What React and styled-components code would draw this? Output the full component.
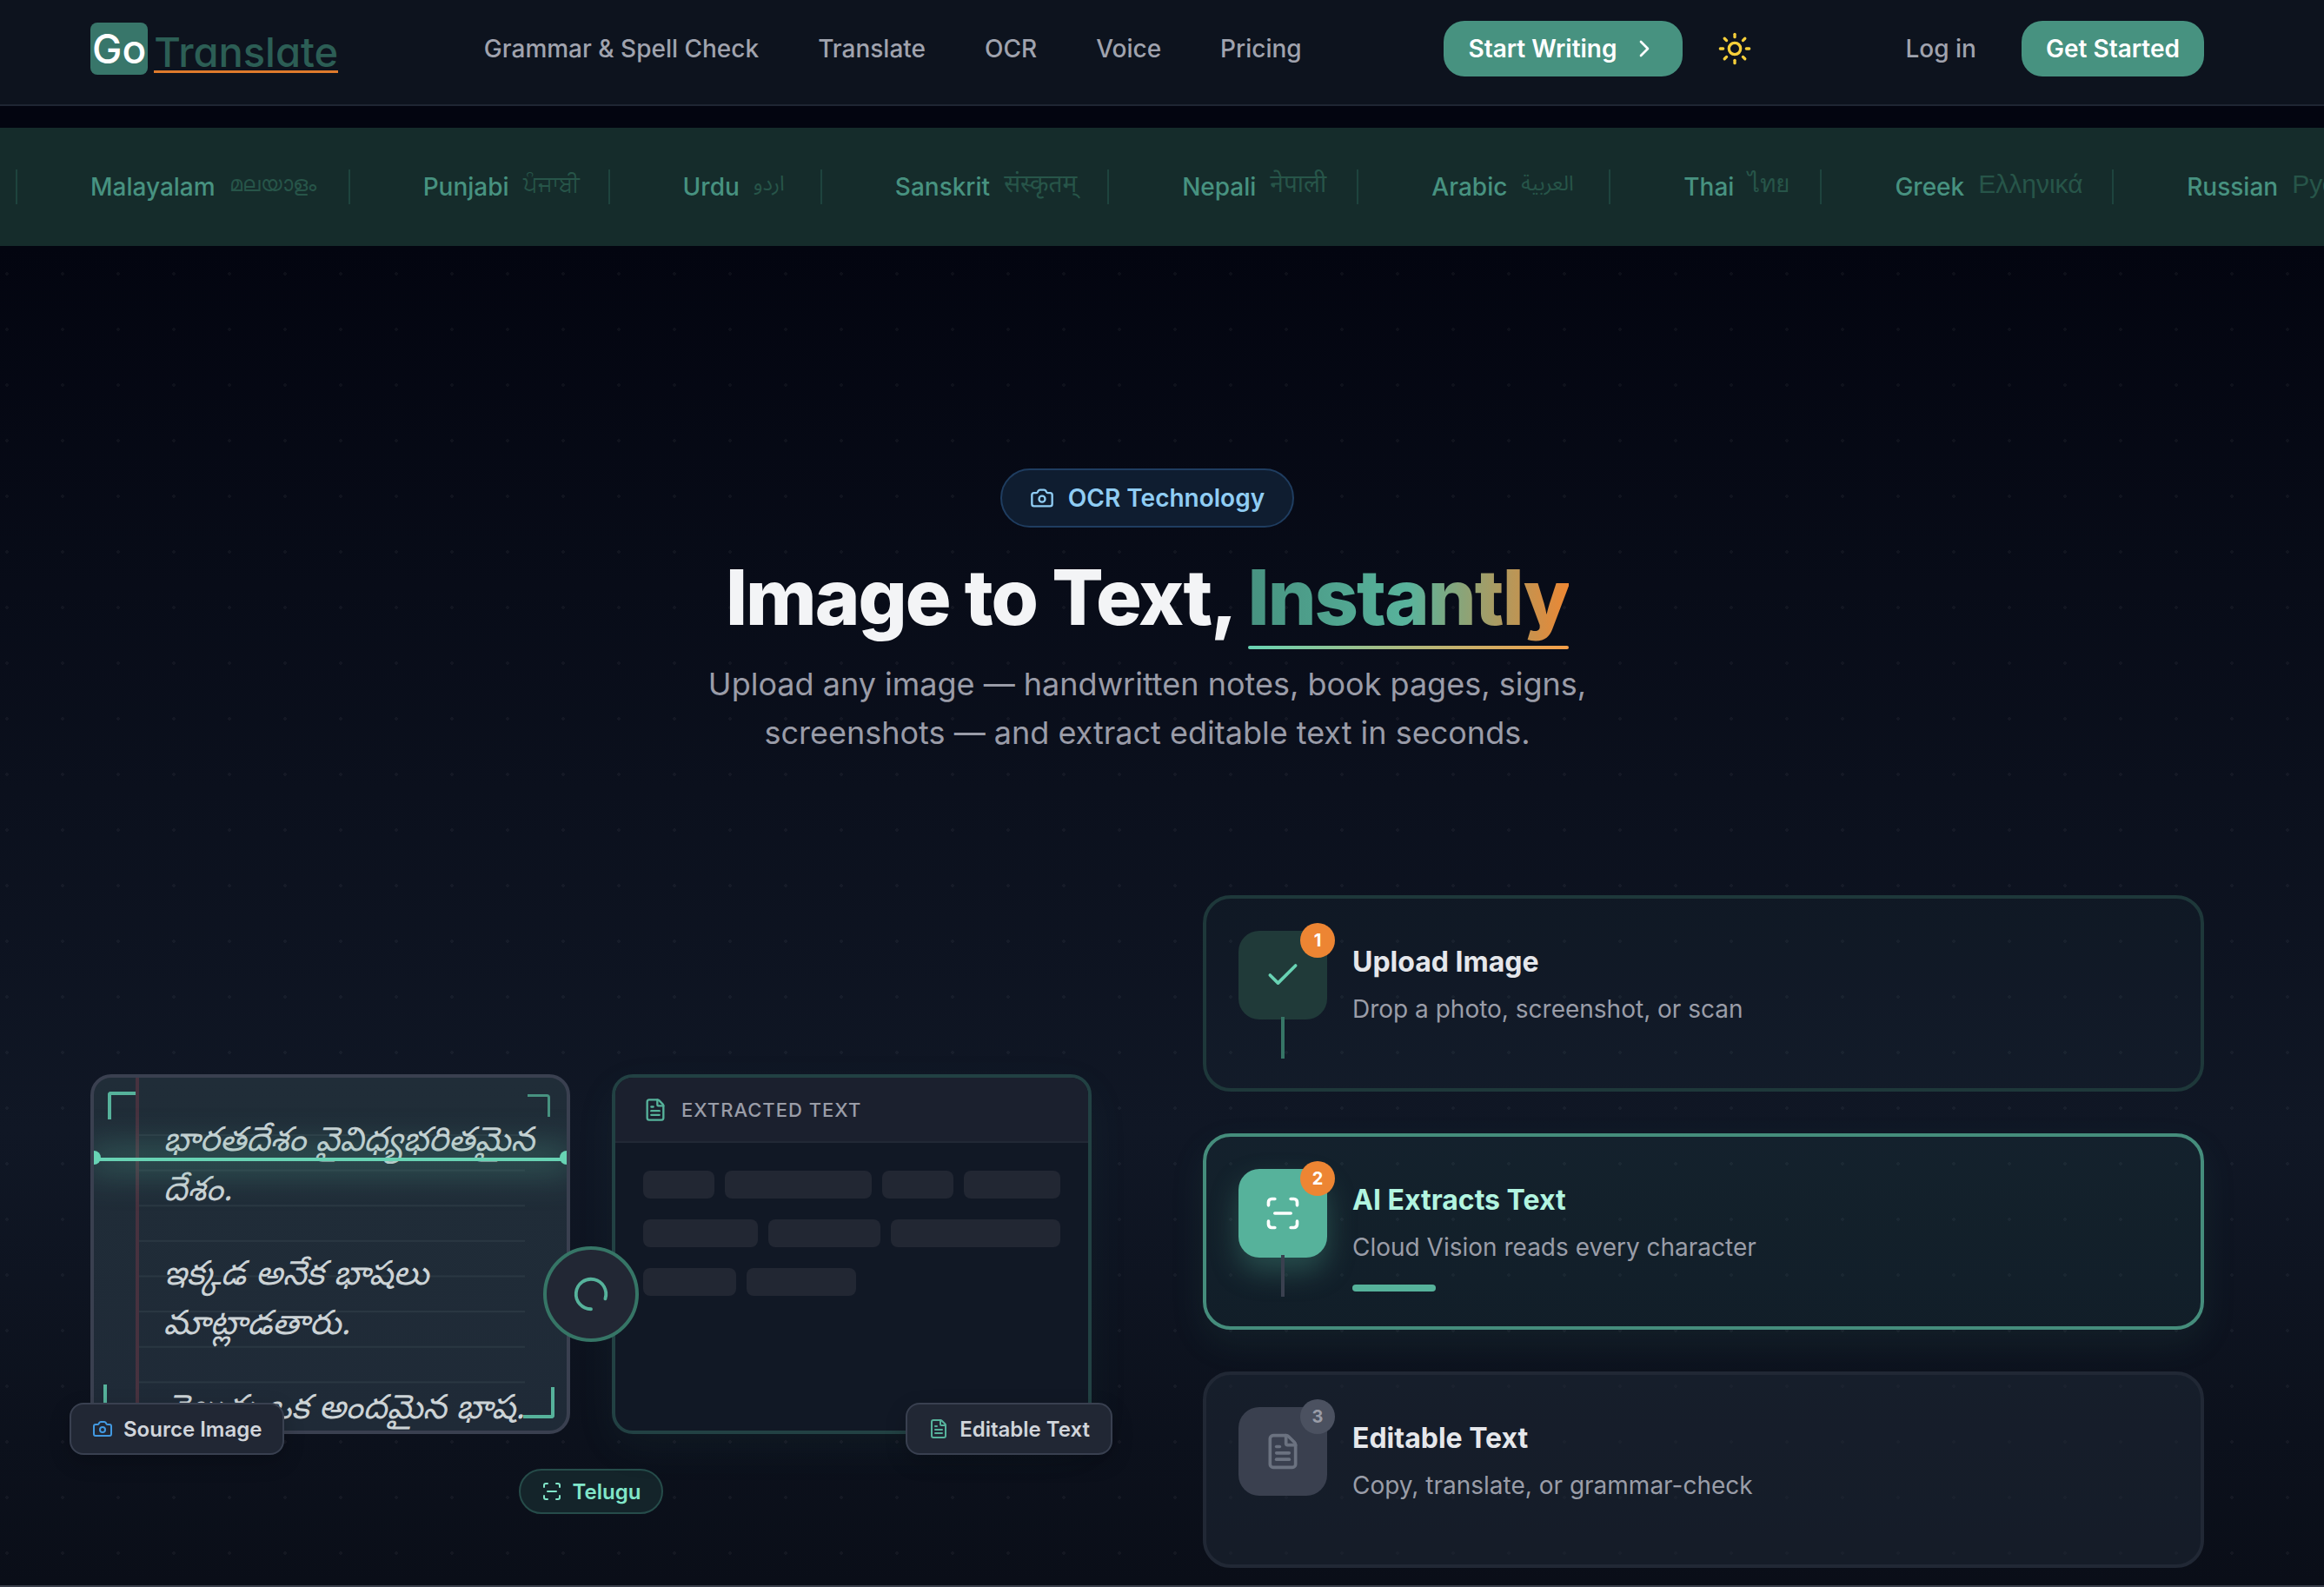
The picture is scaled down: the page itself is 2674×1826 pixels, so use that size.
import React from "react"
import styled, { createGlobalStyle, css } from "styled-components"
import {
  Camera,
  Check,
  ChevronRight,
  FileText,
  LoaderCircle,
  ScanLine,
  Sun,
} from "lucide-react"

const GlobalStyle = createGlobalStyle`
  *, *::before, *::after {
    box-sizing: border-box;
  }

  body {
    margin: 0;
    background: #030510;
    color: #f3f4f6;
    font-family: Inter, "Noto Sans", sans-serif;
    overflow-x: hidden;
  }

  h1, h2, h3, p, ul, ol {
    margin: 0;
    padding: 0;
  }

  ul, ol {
    list-style: none;
  }
`

const Header = styled.header`
  display: flex;
  align-items: center;
  justify-content: space-between;
  height: 122px;
  padding: 0 138px 8px 104px;
  background: #0d131e;
  border-bottom: 2px solid #1f2633;
`

const Logo = styled.a`
  display: flex;
  align-items: center;
  gap: 7px;
  text-decoration: none;
  font-weight: 500;
  font-feature-settings: "cv11";
`

const LogoMark = styled.span`
  padding: 0 2px;
  border-radius: 8px;
  background: #38766a;
  color: #fff;
  font-size: 46px;
  line-height: 60px;
`

const LogoName = styled.span`
  margin-top: 11px;
  border-bottom: 3px solid #dd7a2c;
  color: #2c5e55;
  font-size: 47px;
  line-height: 42px;
`

const Nav = styled.nav`
  display: flex;
  gap: 68px;
  padding-left: 4px;
`

const NavLink = styled.a`
  color: #a0a3ae;
  font-size: 28px;
  font-weight: 500;
  line-height: 40px;
  text-decoration: none;
`

const Actions = styled.div`
  display: flex;
  align-items: center;
`

const Button = styled.button`
  display: flex;
  align-items: center;
  gap: 16px;
  height: 64px;
  padding: 0 28px;
  border: 0;
  border-radius: 24px;
  background: #479280;
  color: #fff;
  font-family: inherit;
  font-size: 28px;
  font-weight: 600;
`

const ThemeButton = styled.button`
  display: flex;
  margin: 0 160px 0 24px;
  padding: 16px;
  border: 0;
  background: none;
  color: #f6cf3a;
`

const LoginLink = styled(NavLink)`
  margin-right: 52px;
`

const Marquee = styled.section`
  margin-top: 25px;
  padding: 48px 0 48px 18px;
  background: #152c2b;
  overflow: hidden;
`

const Languages = styled.ul`
  display: flex;
  width: max-content;
`

const Language = styled.li`
  display: flex;
  align-items: center;
  gap: 16px;
  height: 40px;
  padding: 0 34px 0 84px;
  border-left: 2px solid #1e443e;
  font-size: 28px;
`

const LanguageName = styled.span`
  color: #479280;
  font-weight: 500;
`

// Scripts differ a lot in width, so each one reserves its own slot.
const NativeName = styled.span`
  width: ${(p) => p.$width}px;
  padding-bottom: 6px;
  color: #275549;
  font-family: "Liberation Sans", "Noto Sans", sans-serif;
  line-height: 40px;
  white-space: nowrap;

  &:lang(ml) {
    font-size: 24px;
  }

  &:lang(pa) {
    font-size: 26px;
  }

  &:lang(el),
  &:lang(ru) {
    font-size: 30px;
  }

  &:lang(ar),
  &:lang(ur) {
    font-family: "Noto Sans Arabic", "Noto Naskh Arabic",
      "DejaVu Sans Condensed", "DejaVu Sans", sans-serif;
    font-size: 24px;
  }
`

const Hero = styled.main`
  padding: 256px 138px 20px 104px;
  background-color: #0b0f19;
  background-image: radial-gradient(
      circle,
      rgba(255, 255, 255, 0.04) 2px,
      transparent 2px
    ),
    linear-gradient(#030510, #101725 66%, #0a0e18);
  background-position: -24px 0, 0 0;
  background-size: 64px 64px, 100% 100%;
  border-bottom: 2px solid #3a3f4b;
`

const Intro = styled.div`
  display: flex;
  flex-direction: column;
  align-items: center;
  text-align: center;
`

const Badge = styled.span`
  display: flex;
  align-items: center;
  gap: 16px;
  height: 68px;
  padding: 0 32px;
  border: 2px solid #1f3d60;
  border-radius: 34px;
  background: #0f1d30;
  color: #90cdf4;
  font-size: 28px;
  font-weight: 600;
`

const Title = styled.h1`
  margin-top: 26px;
  font-size: 88px;
  font-weight: 800;
  letter-spacing: -2px;
  line-height: 108px;
`

const Highlight = styled.span`
  position: relative;
  display: inline-block;
  background: linear-gradient(to right, #479280, #58b39c 50%, #ed8733);
  background-clip: text;
  color: transparent;

  &::after {
    content: "";
    position: absolute;
    left: 0;
    right: 0;
    bottom: -6px;
    height: 4px;
    border-radius: 2px;
    background: linear-gradient(to right, #68d3b4, #f69f48);
  }
`

const Lead = styled.p`
  max-width: 1080px;
  margin-top: 18px;
  color: #9a9ca8;
  font-size: 36px;
  line-height: 56px;
`

const Columns = styled.div`
  display: grid;
  grid-template-columns: 1fr 1fr;
  gap: 128px;
  margin-top: 159px;
`

const Demo = styled.div`
  align-self: end;
  position: relative;
  display: flex;
  flex-direction: column;
  align-items: center;
  gap: 40px;
  margin-bottom: 62px;
`

const Panels = styled.div`
  display: grid;
  grid-template-columns: 1fr 1fr;
  gap: 48px;
  width: 100%;
`

const Panel = styled.div`
  position: relative;
  aspect-ratio: 4 / 3;
`

const Frame = styled.div`
  position: relative;
  height: 100%;
  overflow: hidden;
  border: 4px solid ${(p) => (p.$result ? "#224143" : "#3a4050")};
  border-radius: 24px;
  background: ${(p) =>
    p.$result ? "#111825" : "linear-gradient(#202d38, #1f2a37)"};
  box-shadow: ${(p) =>
    p.$result ? "0 16px 48px rgba(71, 146, 128, 0.07)" : "none"};
`

const Margin = styled.div`
  position: absolute;
  top: 0;
  bottom: 0;
  left: 48px;
  width: 4px;
  background: #47323f;
`

const Ruling = styled.div`
  position: absolute;
  top: 16%;
  left: 48px;
  right: 48px;
  height: 80%;
  background: linear-gradient(#2a3742 2px, transparent 2px);
  background-size: 100% 12.5%;
`

const Handwriting = styled.div`
  position: relative;
  display: flex;
  flex-direction: column;
  gap: 40px;
  padding: 48px 24px 0 80px;
  color: #ccd3d6;
  font-family: "Noto Sans Telugu", "Noto Sans", sans-serif;
  font-size: 39px;
  font-style: italic;
  line-height: 57px;
  white-space: nowrap;
`

const ScanBeam = styled.div`
  position: absolute;
  top: 92px;
  left: 0;
  right: 0;
  height: 4px;
  background: #68d3b4;
  box-shadow: 0 0 40px 8px rgba(88, 179, 156, 0.5);

  &::before,
  &::after {
    content: "";
    position: absolute;
    top: -8px;
    width: 16px;
    height: 16px;
    border-radius: 50%;
    background: #68d3b4;
  }

  &::before {
    left: -8px;
  }

  &::after {
    right: -8px;
  }
`

const Corner = styled.span`
  position: absolute;
  ${(p) => p.$y}: ${(p) => 32 - p.$size / 2}px;
  ${(p) => p.$x}: ${(p) => 32 - p.$size / 2}px;
  width: ${(p) => p.$size}px;
  height: ${(p) => p.$size}px;
  border: 0 solid ${(p) => (p.$dim ? "#479280" : "#56b29b")};
  border-${(p) => p.$y}-width: ${(p) => (p.$dim ? 3 : 4)}px;
  border-${(p) => p.$x}-width: ${(p) => (p.$dim ? 3 : 4)}px;
  border-${(p) => p.$y}-${(p) => p.$x}-radius: 4px;
`

const Tag = styled.span`
  position: absolute;
  bottom: -24px;
  ${(p) => p.$side}: -24px;
  display: flex;
  align-items: center;
  gap: 12px;
  height: 60px;
  padding: 0 24px;
  border: 2px solid #394050;
  border-radius: 16px;
  background: #212734;
  box-shadow: 0 8px 24px rgba(0, 0, 0, 0.2);
  color: #d1d5db;
  font-size: 24px;
  font-weight: 600;

  svg {
    color: ${(p) => p.$accent};
  }
`

const ResultHeader = styled.div`
  display: flex;
  align-items: center;
  gap: 16px;
  height: 75px;
  padding: 0 32px;
  background: #1b202e;
  border-bottom: 2px solid #222835;
  color: #9a9da8;
  font-size: 22px;
  font-weight: 500;
  letter-spacing: 1px;

  svg {
    color: #56b29b;
  }
`

const SkeletonRows = styled.div`
  display: grid;
  gap: 24px;
  padding: 32px;
`

const SkeletonRow = styled.div`
  display: grid;
  grid-template-columns: ${(p) => p.$columns};
  gap: 12px;
`

const Skeleton = styled.span`
  height: 32px;
  border-radius: 8px;
  background: #222733;
`

const Processing = styled.div`
  position: absolute;
  top: 50%;
  left: 50%;
  display: flex;
  align-items: center;
  justify-content: center;
  width: 110px;
  height: 110px;
  border: 4px solid #367566;
  border-radius: 50%;
  background: #222734;
  color: #56b29b;
  transform: translate(-50%, -50%);

  svg {
    transform: rotate(90deg);
  }
`

const LanguagePill = styled.span`
  display: flex;
  align-items: center;
  gap: 12px;
  height: 52px;
  padding: 0 24px;
  border: 2px solid #264c4a;
  border-radius: 26px;
  background: #14242a;
  color: #81e6c9;
  font-size: 24px;
  font-weight: 600;
`

const Steps = styled.ol`
  display: grid;
  gap: 48px;
`

const stepStyles = {
  done: css`
    border-color: #1e383a;
    background: rgba(71, 146, 128, 0.05);
  `,
  active: css`
    border-color: #458d7c;
    background: rgba(71, 146, 128, 0.09);
    box-shadow: 0 16px 40px rgba(71, 146, 128, 0.1);
  `,
  pending: css`
    border-color: #212835;
    background: rgba(31, 41, 55, 0.5);
  `,
}

const Step = styled.li`
  display: flex;
  gap: 29px;
  min-height: 226px;
  padding: 37px;
  border: 4px solid;
  border-radius: 32px;
  ${(p) => stepStyles[p.$state]}
`

const tileStyles = {
  done: css`
    background: #203a39;
    color: #68d3b4;
  `,
  active: css`
    background: #56b29b;
    color: #fff;
    box-shadow: 0 16px 32px rgba(71, 146, 128, 0.4);
  `,
  pending: css`
    background: #3a404f;
    color: #6b7280;
  `,
}

const Tile = styled.div`
  position: relative;
  display: flex;
  align-items: center;
  justify-content: center;
  flex: none;
  width: 102px;
  height: 102px;
  border-radius: 24px;
  ${(p) => tileStyles[p.$state]}
`

const Connector = styled.span`
  position: absolute;
  top: 99px;
  left: 49px;
  width: 4px;
  height: 48px;
  background: ${(p) => (p.$state === "done" ? "#367566" : "#3a404f")};
`

const StepNumber = styled.span`
  position: absolute;
  top: -9px;
  right: -9px;
  display: flex;
  align-items: center;
  justify-content: center;
  width: 40px;
  height: 40px;
  border-radius: 50%;
  background: ${(p) => (p.$state === "pending" ? "#4b5160" : "#ed8533")};
  color: ${(p) => (p.$state === "pending" ? "#9a9da8" : "#fff")};
  font-size: 20px;
  font-weight: 700;
`

const StepText = styled.div`
  padding-top: 16px;
`

const StepTitle = styled.h3`
  color: ${(p) => (p.$state === "active" ? "#b2f5e0" : "#e5e7eb")};
  font-size: 32px;
  font-weight: 700;
  line-height: 40px;
`

const StepNote = styled.p`
  margin-top: 13px;
  color: #9a9da8;
  font-size: 28px;
  line-height: 42px;
`

const Progress = styled.div`
  width: 96px;
  height: 8px;
  margin-top: 22px;
  border-radius: 4px;
  background: #56b29b;
`

const links = ["Grammar & Spell Check", "Translate", "OCR", "Voice", "Pricing"]

const languages = [
  ["Malayalam", "മലയാളം", "ml", 103],
  ["Punjabi", "ਪੰਜਾਬੀ", "pa", 64],
  ["Urdu", "اردو", "ur", 43],
  ["Sanskrit", "संस्कृतम्", "sa", 85],
  ["Nepali", "नेपाली", "ne", 66],
  ["Arabic", "العربية", "ar", 67],
  ["Thai", "ไทย", "th", 49],
  ["Greek", "Ελληνικά", "el", 120],
  ["Russian", "Русский", "ru", 104],
]

const skeletons = [
  ["82fr 169fr 82fr 111fr", 4],
  ["132fr 129fr 195fr", 3],
  ["107fr 126fr 223fr", 2],
]

const steps = [
  {
    title: "Upload Image",
    note: "Drop a photo, screenshot, or scan",
    state: "done",
    icon: Check,
  },
  {
    title: "AI Extracts Text",
    note: "Cloud Vision reads every character",
    state: "active",
    icon: ScanLine,
  },
  {
    title: "Editable Text",
    note: "Copy, translate, or grammar-check",
    state: "pending",
    icon: FileText,
  },
]

const TopBar = () => (
  <Header>
    <Logo href="#">
      <LogoMark>Go</LogoMark>
      <LogoName>Translate</LogoName>
    </Logo>
    <Nav>
      {links.map((link) => (
        <NavLink href="#" key={link}>
          {link}
        </NavLink>
      ))}
    </Nav>
    <Actions>
      <Button>
        Start Writing
        <ChevronRight size={32} />
      </Button>
      <ThemeButton aria-label="Toggle theme">
        <Sun size={40} />
      </ThemeButton>
      <LoginLink href="#">Log in</LoginLink>
      <Button>Get Started</Button>
    </Actions>
  </Header>
)

const SourcePanel = () => (
  <Panel>
    <Frame>
      <Ruling />
      <Margin />
      <Handwriting lang="te">
        <p>
          భారతదేశం వైవిధ్యభరితమైన
          <br />
          దేశం.
        </p>
        <p>
          ఇక్కడ అనేక భాషలు
          <br />
          మాట్లాడతారు.
        </p>
        <p>తెలుగు ఒక అందమైన భాష.</p>
      </Handwriting>
      <ScanBeam />
      <Corner $y="top" $x="left" $size={32} />
      <Corner $y="top" $x="right" $size={26} $dim />
      <Corner $y="bottom" $x="left" $size={42} />
      <Corner $y="bottom" $x="right" $size={36} />
    </Frame>
    <Tag $side="left" $accent="#4299e1">
      <Camera size={24} />
      Source Image
    </Tag>
  </Panel>
)

const ResultPanel = () => (
  <Panel>
    <Frame $result>
      <ResultHeader>
        <FileText size={28} />
        EXTRACTED TEXT
      </ResultHeader>
      <SkeletonRows>
        {skeletons.map(([columns, count]) => (
          <SkeletonRow $columns={columns} key={columns}>
            {Array.from({ length: count }, (_, i) => (
              <Skeleton key={i} />
            ))}
          </SkeletonRow>
        ))}
      </SkeletonRows>
    </Frame>
    <Tag $side="right" $accent="#56b29b">
      <FileText size={24} />
      Editable Text
    </Tag>
  </Panel>
)

const App = () => (
  <>
    <GlobalStyle />
    <TopBar />
    <Marquee>
      <Languages>
        {languages.map(([name, native, code, width]) => (
          <Language key={code}>
            <LanguageName>{name}</LanguageName>
            <NativeName lang={code} $width={width}>
              {native}
            </NativeName>
          </Language>
        ))}
      </Languages>
    </Marquee>
    <Hero>
      <Intro>
        <Badge>
          <Camera size={28} />
          OCR Technology
        </Badge>
        <Title>
          Image to Text, <Highlight>Instantly</Highlight>
        </Title>
        <Lead>
          Upload any image — handwritten notes, book pages, signs, screenshots —
          and extract editable text in seconds.
        </Lead>
      </Intro>
      <Columns>
        <Demo>
          <Panels>
            <SourcePanel />
            <ResultPanel />
          </Panels>
          <Processing>
            <LoaderCircle size={46} />
          </Processing>
          <LanguagePill>
            <ScanLine size={24} />
            Telugu
          </LanguagePill>
        </Demo>
        <Steps>
          {steps.map(({ title, note, state, icon: Icon }, i) => (
            <Step $state={state} key={title}>
              <Tile $state={state}>
                <Icon size={44} />
                {i < steps.length - 1 && <Connector $state={state} />}
                <StepNumber $state={state}>{i + 1}</StepNumber>
              </Tile>
              <StepText>
                <StepTitle $state={state}>{title}</StepTitle>
                <StepNote>{note}</StepNote>
                {state === "active" && <Progress />}
              </StepText>
            </Step>
          ))}
        </Steps>
      </Columns>
    </Hero>
  </>
)

export default App
